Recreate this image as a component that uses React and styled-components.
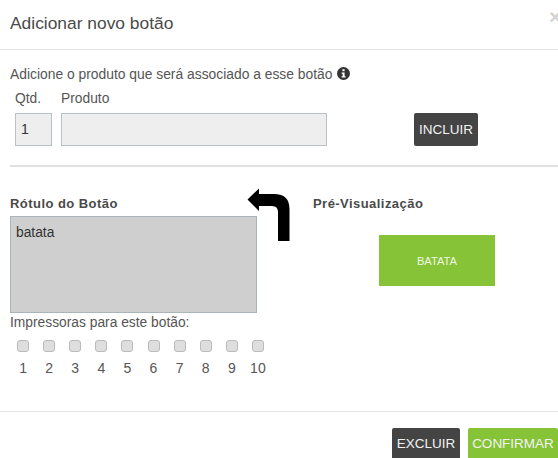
import styled, { createGlobalStyle } from "styled-components";

const GlobalStyle = createGlobalStyle`
  html, body {
    margin: 0;
    padding: 0;
    background: #fff;
    width: 558px;
    height: 458px;
    overflow: hidden;
  }
  * {
    box-sizing: border-box;
  }
`;

const Modal = styled.div`
  width: 558px;
  height: 458px;
  overflow: hidden;
  font-family: "Liberation Sans", Arial, sans-serif;
  color: #555;
  font-size: 13.8px;
`;

const Header = styled.div`
  height: 50px;
  border-bottom: 1px solid #e5e5e5;
  padding: 13px 10px 0;
  display: flex;
  justify-content: space-between;
`;

const Title = styled.h4`
  margin: 0;
  font-size: 17.4px;
  line-height: 20px;
  font-weight: 400;
  color: #4a4a4a;
`;

const Close = styled.span`
  position: absolute;
  left: 549px;
  top: 6px;
  font-size: 21px;
  line-height: 21px;
  font-weight: 700;
  color: #d4d4d4;
`;

const Body = styled.div`
  position: relative;
  height: 361px;
  padding: 16px 0 0 10px;
`;

const Intro = styled.div`
  display: flex;
  align-items: center;
  gap: 5px;
  height: 16px;
  font-size: 13.85px;
  color: #555;
`;

const InfoIcon = styled.svg`
  margin-top: -2px;
`;

const ProductGrid = styled.div`
  display: grid;
  grid-template-columns: 37px 266px;
  column-gap: 9px;
  padding: 8px 0 0 5px;
  position: relative;
`;

const FieldLabel = styled.div`
  height: 23px;
  line-height: 17px;
  color: #555;
`;

const TextField = styled.div`
  height: 33px;
  background: #eee;
  border: 1px solid #b8c2c4;
  padding: 0 5px;
  line-height: 31px;
  font-size: 14px;
  color: #333;
`;

const ActionButton = styled.button`
  height: 33px;
  width: ${(p) => p.$width}px;
  padding: 0;
  border: none;
  border-radius: 2px;
  background: ${(p) => p.$color};
  color: #f2f2f2;
  font-family: inherit;
  font-size: 13.5px;
  white-space: nowrap;
  flex-shrink: 0;
`;

const IncludeSlot = styled.div`
  position: absolute;
  left: 404px;
  top: 31px;
`;

const Rule = styled.div`
  height: 2px;
  margin-top: 19px;
  background: #e0e0e0;
`;

const Columns = styled.div`
  display: flex;
  padding-top: 28px;
`;

const LeftColumn = styled.div`
  width: 303px;
`;

const RightColumn = styled.div`
  flex: 1;
`;

const SectionTitle = styled.div`
  height: 21px;
  line-height: 17px;
  font-size: 13px;
  font-weight: 700;
  letter-spacing: 0.45px;
  color: #4a4a4a;
`;

const LabelArea = styled.div`
  width: 247px;
  height: 97px;
  background: #cfcfcf;
  border: 1px solid #a9b5b9;
  padding: 7px 5px;
  line-height: 17px;
  color: #333;
`;

const PrintersLabel = styled.div`
  margin-top: 1px;
  height: 17px;
  line-height: 17px;
  color: #555;
`;

const Printers = styled.div`
  display: flex;
  padding-top: 9px;
`;

const Printer = styled.div`
  width: 26.1px;
  display: flex;
  flex-direction: column;
  align-items: center;
  gap: 8px;
`;

const Check = styled.span`
  width: 12px;
  height: 12px;
  border: 1px solid #bbb;
  border-radius: 3px;
  background: #dedede;
`;

const PrinterNum = styled.span`
  font-size: 14px;
  line-height: 16px;
  color: #555;
`;

const Preview = styled.div`
  width: 116px;
  height: 51px;
  margin: 19px 0 0 66px;
  background: #86c336;
  color: #eef6e2;
  font-size: 11.2px;
  display: flex;
  align-items: center;
  justify-content: center;
`;

const ArrowIcon = styled.svg`
  position: absolute;
  left: 247px;
  top: 138px;
`;

const Footer = styled.div`
  border-top: 1px solid #e5e5e5;
  height: 47px;
  padding-top: 16px;
  display: flex;
  justify-content: flex-end;
  gap: 8px;

  /* the buttons run past the bottom of the window */
  ${ActionButton} {
    padding-bottom: 3px;
  }
`;

export default function App() {
  const printers = [1, 2, 3, 4, 5, 6, 7, 8, 9, 10];

  return (
    <Modal>
      <GlobalStyle />
      <Header>
        <Title>Adicionar novo botão</Title>
        <Close>×</Close>
      </Header>
      <Body>
        <Intro>
          Adicione o produto que será associado a esse botão
          <InfoIcon width="13" height="13" viewBox="0 0 13 13">
            <circle cx="6.5" cy="6.5" r="6.5" fill="#333" />
            <rect x="5.4" y="2.2" width="2.2" height="2" fill="#fff" />
            <path d="M4.6 5.4h3v3.9h1v1.3H4.6V9.3h1V6.7h-1z" fill="#fff" />
          </InfoIcon>
        </Intro>
        <ProductGrid>
          <FieldLabel>Qtd.</FieldLabel>
          <FieldLabel>Produto</FieldLabel>
          <TextField>1</TextField>
          <TextField />
          <IncludeSlot>
            <ActionButton $color="#444" $width={64}>INCLUIR</ActionButton>
          </IncludeSlot>
        </ProductGrid>
        <Rule />
        <Columns>
          <LeftColumn>
            <SectionTitle>Rótulo do Botão</SectionTitle>
            <LabelArea>batata</LabelArea>
            <PrintersLabel>Impressoras para este botão:</PrintersLabel>
            <Printers>
              {printers.map((n) => (
                <Printer key={n}>
                  <Check />
                  <PrinterNum>{n}</PrinterNum>
                </Printer>
              ))}
            </Printers>
          </LeftColumn>
          <RightColumn>
            <SectionTitle>Pré-Visualização</SectionTitle>
            <Preview>BATATA</Preview>
          </RightColumn>
        </Columns>
        <ArrowIcon width="44" height="54" viewBox="0 0 44 54">
          <path
            d="M0.5 11.5 L12 0.5 L12 6 L27 6 Q42.5 6 42.5 21 L42.5 53 L31 53 L31 24 Q31 18 25 18 L12 18 L12 23 Z"
            fill="#000"
          />
        </ArrowIcon>
      </Body>
      <Footer>
        <ActionButton $color="#444" $width={68}>EXCLUIR</ActionButton>
        <ActionButton $color="#86c336" $width={90}>CONFIRMAR</ActionButton>
      </Footer>
    </Modal>
  );
}
